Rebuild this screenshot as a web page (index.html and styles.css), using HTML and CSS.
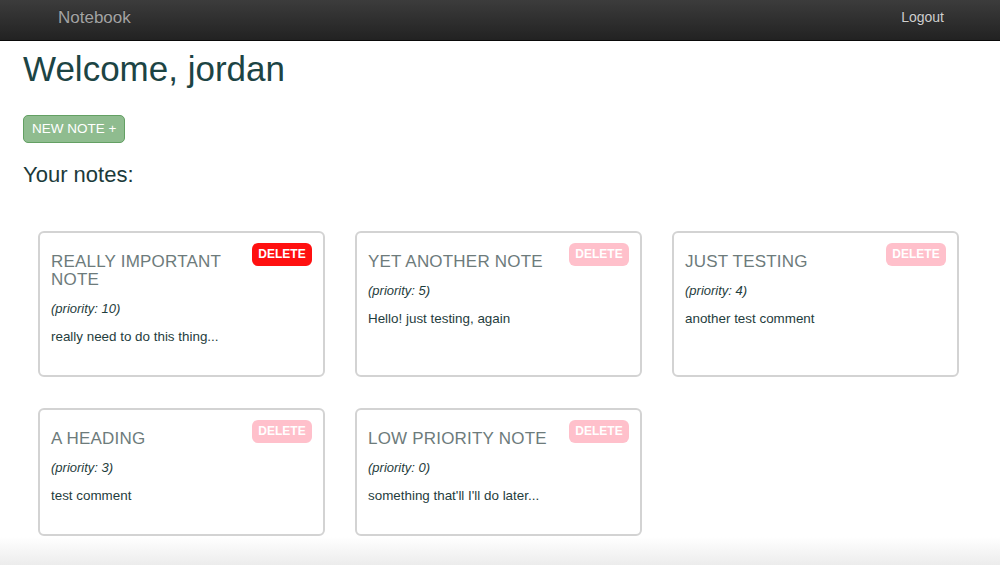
FILE: index.html
```html
<!DOCTYPE html>
<html lang="en">
<head>
<meta charset="utf-8">
<title>Notebook</title>
<link rel="stylesheet" href="styles.css">
</head>
<body>
<nav class="navbar">
  <a class="brand" href="#">Notebook</a>
  <a class="nav-link" href="#">Logout</a>
</nav>
<main class="container">
  <h1 class="welcome">Welcome, jordan</h1>
  <button class="btn-new">NEW NOTE +</button>
  <h2 class="section-title">Your notes:</h2>
  <div class="notes">
    <div class="note">
      <div class="note-head">
        <h3 class="note-title">REALLY IMPORTANT NOTE</h3>
        <button class="btn-delete active">DELETE</button>
      </div>
      <p class="priority">(priority: 10)</p>
      <p class="comment">really need to do this thing...</p>
    </div>
    <div class="note">
      <div class="note-head">
        <h3 class="note-title">YET ANOTHER NOTE</h3>
        <button class="btn-delete">DELETE</button>
      </div>
      <p class="priority">(priority: 5)</p>
      <p class="comment">Hello! just testing, again</p>
    </div>
    <div class="note">
      <div class="note-head">
        <h3 class="note-title">JUST TESTING</h3>
        <button class="btn-delete">DELETE</button>
      </div>
      <p class="priority">(priority: 4)</p>
      <p class="comment">another test comment</p>
    </div>
    <div class="note">
      <div class="note-head">
        <h3 class="note-title">A HEADING</h3>
        <button class="btn-delete">DELETE</button>
      </div>
      <p class="priority">(priority: 3)</p>
      <p class="comment">test comment</p>
    </div>
    <div class="note">
      <div class="note-head">
        <h3 class="note-title">LOW PRIORITY NOTE</h3>
        <button class="btn-delete">DELETE</button>
      </div>
      <p class="priority">(priority: 0)</p>
      <p class="comment">something that'll I'll do later...</p>
    </div>
  </div>
</main>
<div class="page-bottom"></div>
</body>
</html>
```
FILE: styles.css
```css
html, body {
  margin: 0;
  padding: 0;
}
body {
  font-family: "Liberation Sans", Arial, Helvetica, sans-serif;
  color: #1f3d3d;
  background: #fff;
}
.navbar {
  height: 40px;
  border-bottom: 1px solid #0a0a0a;
  background: linear-gradient(to bottom, #3c3c3c 0%, #222 100%);
  display: flex;
  align-items: center;
  justify-content: space-between;
  padding: 0 56px 0 58px;
}
.brand {
  color: #a3a3a3;
  font-size: 17px;
  text-decoration: none;
  text-shadow: 0 -1px 0 rgba(0,0,0,.25);
  margin-top: -5px;
}
.nav-link {
  color: #cfcfcf;
  font-size: 14px;
  text-decoration: none;
  text-shadow: 0 -1px 0 rgba(0,0,0,.25);
  margin-top: -6px;
}
.container {
  padding: 0 23px;
}
.welcome {
  font-size: 35px;
  font-weight: normal;
  line-height: 1.1;
  color: #1c4444;
  margin: 9px 0 26px;
}
.btn-new {
  display: block;
  font-family: inherit;
  height: 28px;
  padding: 0 8px;
  font-size: 13.5px;
  color: #fff;
  background: #8fbc8f;
  border: 1px solid #63a063;
  border-radius: 5px;
  margin: 0 0 20px;
}
.section-title {
  font-size: 22px;
  font-weight: normal;
  line-height: 1.1;
  color: #1c3a3a;
  margin: 0 0 44px;
}
.notes {
  display: grid;
  grid-template-columns: repeat(3, 287px);
  column-gap: 30px;
  row-gap: 31px;
  margin-left: 15px;
}
.note {
  border: 2px solid #d3d3d3;
  border-radius: 6px;
  padding: 10px 11px 20px;
}
.note-head {
  display: flex;
  align-items: flex-start;
  gap: 10px;
}
.note-title {
  flex: 1;
  margin: 10px 0 11px;
  font-size: 17px;
  line-height: 18px;
  font-weight: 300;
  color: #6d7b7b;
  letter-spacing: 0.2px;
}
.btn-delete {
  flex: none;
  width: 60px;
  height: 23px;
  padding: 0;
  border: none;
  border-radius: 6px;
  background: #ffc0cb;
  color: #fff;
  font-family: inherit;
  font-size: 12px;
  font-weight: bold;
}
.btn-delete.active {
  background: #ff1010;
}
.priority {
  margin: 0 0 10px;
  font-size: 13px;
  line-height: 18px;
  font-style: italic;
}
.comment {
  margin: 0 0 9px;
  font-size: 13.4px;
  line-height: 18px;
}
.page-bottom {
  height: 28px;
  margin-top: 1px;
  background: linear-gradient(to bottom, #ffffff 0%, #ececec 100%);
}
```
